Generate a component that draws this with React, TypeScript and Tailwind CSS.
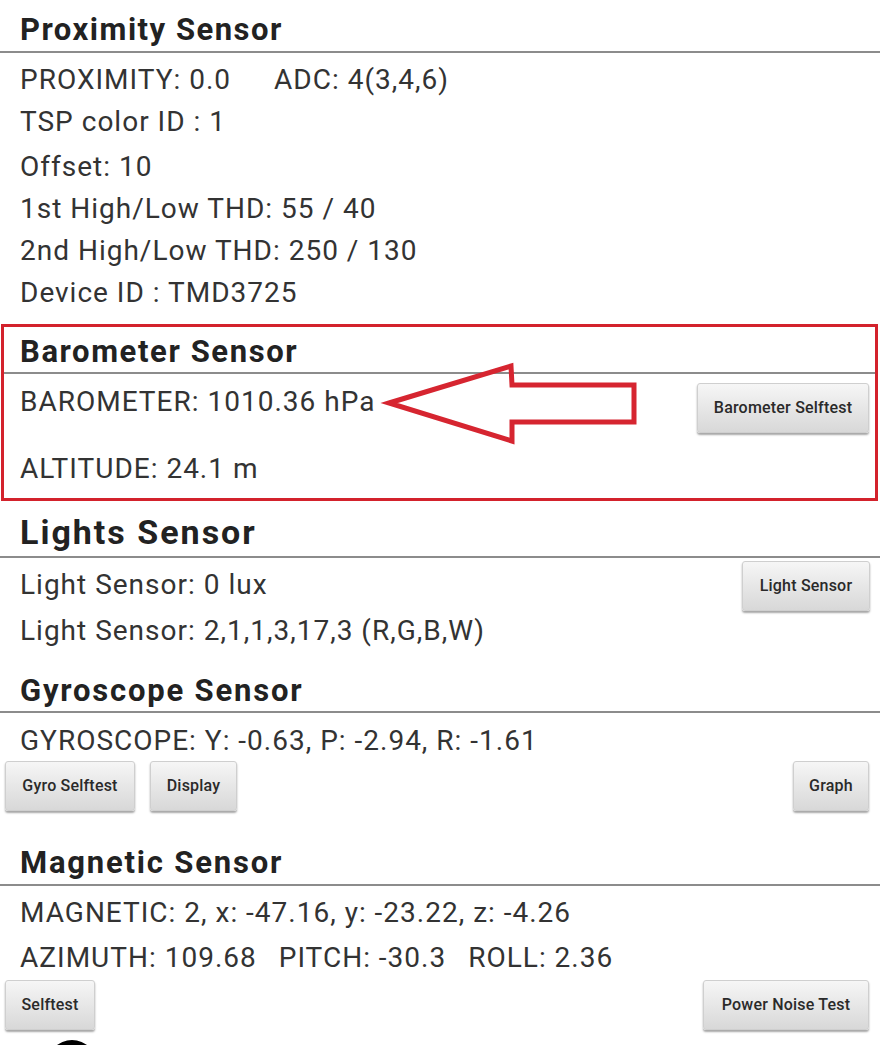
import React from "react";

const Btn = ({ children, className = "" }: { children: React.ReactNode; className?: string }) => (
  <button
    className={
      "h-[50px] px-0 rounded-[3px] border border-[#cfcfcf] bg-linear-to-b from-[#f6f6f6] to-[#d8d8d8] shadow-[0_2px_2px_rgba(0,0,0,0.35)] text-[16px] font-medium tracking-[0.2px] text-[#2a2a2a] whitespace-nowrap " +
      className
    }
  >
    {children}
  </button>
);

const Row = ({ children, className = "" }: { children: React.ReactNode; className?: string }) => (
  <div className={"h-[42px] flex items-center pl-5 text-[28px] tracking-[1px] text-[#333] whitespace-nowrap " + className}>
    {children}
  </div>
);

const H = "flex items-center pl-5 border-b-2 border-[#8c8c8c] font-bold text-[#222] whitespace-nowrap ";

export default function App() {
  return (
    <div
      className="relative w-[880px] h-[1045px] overflow-hidden bg-white"
      style={{ fontFamily: "Roboto, 'Noto Sans', sans-serif" }}
    >
      {/* Proximity */}
      <div className={H + "h-[53px] pt-[9px] text-[31px] tracking-[1.5px]"}>Proximity Sensor</div>
      <div className="pt-[6px]">
        <Row>
          <span>PROXIMITY: 0.0</span>
          <span className="ml-[43px]">ADC: 4(3,4,6)</span>
        </Row>
        <Row>TSP color ID : 1</Row>
        <Row className="mt-[3px]">Offset: 10</Row>
        <Row>1st High/Low THD: 55 / 40</Row>
        <Row>2nd High/Low THD: 250 / 130</Row>
        <Row>Device ID : TMD3725</Row>
      </div>

      {/* Barometer (highlighted) */}
      <div className="mt-[10px] ml-[1px] mr-[2px] border-[3px] border-[#d3222c]">
        <div className={H + "h-[47px] pt-[5px] pl-[16px] text-[31px] tracking-[1.6px]"}>Barometer Sensor</div>
        <div className="flex items-start justify-between pt-[7px] pr-[6px]">
          <Row className="pl-[16px] tracking-[1.2px]">BAROMETER: 1010.36 hPa</Row>
          <Btn className="mt-[2px] h-[49px] w-[172px]">Barometer Selftest</Btn>
        </div>
        <Row className="mt-[15px] pl-[16px]">ALTITUDE: 24.1 m</Row>
        <div className="h-[8px]" />
      </div>

      {/* Lights */}
      <div className={H + "h-[57px] pt-[7px] text-[34px] tracking-[2px]"}>Lights Sensor</div>
      <div className="flex items-start justify-between pr-[10px]">
        <Row className="mt-[6px]">Light Sensor: 0 lux</Row>
        <Btn className="mt-[3px] w-[128px]">Light Sensor</Btn>
      </div>
      <Row className="-mt-[1px]">Light Sensor: 2,1,1,3,17,3 (R,G,B,W)</Row>

      {/* Gyroscope */}
      <div className={H + "h-[61px] pt-[19px] text-[31px] tracking-[1.8px]"}>Gyroscope Sensor</div>
      <Row className="mt-[7px]">GYROSCOPE: Y: -0.63, P: -2.94, R: -1.61</Row>
      <div className="flex items-start gap-[15px] pl-[5px] pr-[11px] -mt-[1px]">
        <Btn className="w-[130px]">Gyro Selftest</Btn>
        <Btn className="w-[87px]">Display</Btn>
        <Btn className="ml-auto w-[76px]">Graph</Btn>
      </div>

      {/* Magnetic */}
      <div className={H + "h-[75px] pt-[31px] text-[31px] tracking-[1.8px]"}>Magnetic Sensor</div>
      <Row className="mt-[6px] tracking-[0.9px]">MAGNETIC: 2, x: -47.16, y: -23.22, z: -4.26</Row>
      <Row className="mt-[3px]">
        <span>AZIMUTH: 109.68</span>
        <span className="ml-[22px]">PITCH: -30.3</span>
        <span className="ml-[22px]">ROLL: 2.36</span>
      </Row>
      <div className="flex items-start pl-[5px] pr-[11px] mt-[1px]">
        <Btn className="w-[90px]">Selftest</Btn>
        <Btn className="ml-auto w-[166px]">Power Noise Test</Btn>
      </div>
      <div className="mt-[10px] ml-[47px] w-[50px] h-[50px] rounded-full bg-black" />

      {/* Annotation arrow */}
      <svg
        className="absolute left-0 top-0 pointer-events-none"
        width="880"
        height="1045"
        viewBox="0 0 880 1045"
      >
        <polygon
          points="389,403 511,366 512,385 634,385 634,422 512,422 512,441"
          fill="none"
          stroke="#d62530"
          strokeWidth="5"
          strokeLinejoin="miter"
        />
      </svg>
    </div>
  );
}
